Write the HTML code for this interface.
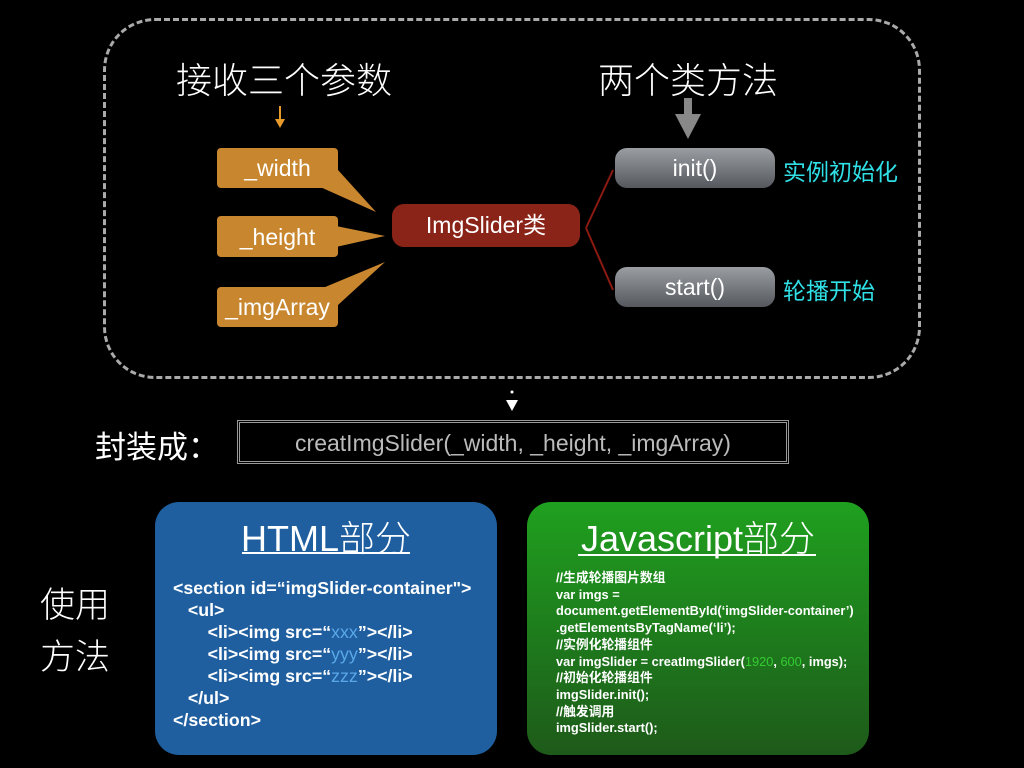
<!DOCTYPE html>
<html><head><meta charset="utf-8"><style>
body{margin:0;width:1024px;height:768px;background:#000;position:relative;overflow:hidden;font-family:"Liberation Sans","Noto Sans CJK SC",sans-serif;color:#fff}
.a{position:absolute;white-space:nowrap}
.t{font-size:35px;font-weight:300}
.g{background:linear-gradient(#9a9ea3,#55595e);border-radius:12px;text-align:center;font-size:23px;line-height:40px;width:160px;height:40px}
.c{color:#2fe0e6;font-size:23px}
.code{font-weight:bold;font-size:17.8px;line-height:22px}
.js{font-weight:bold;font-size:12.8px;line-height:16.7px}
</style></head><body>
<div class="a" style="left:103px;top:18px;width:812px;height:355px;border:3px dashed #aaa;border-radius:52px"></div>
<div class="a t" style="left:176px;top:52px;font-size:36px">接收三个参数</div>
<div class="a t" style="left:598px;top:52px;font-size:36px">两个类方法</div>
<svg class="a" style="left:0;top:0" width="1024" height="768">
<line x1="280" y1="106" x2="280" y2="122" stroke="#e59a2a" stroke-width="2"/>
<polygon points="275,119 285,119 280,128" fill="#e59a2a"/>
<rect x="684" y="98" width="8" height="20" fill="#888"/>
<polygon points="675,114 701,114 688,139" fill="#888"/>
<g fill="#c8862e">
<rect x="217" y="148" width="121" height="40" rx="4"/>
<polygon points="318,186 338,170 376,212"/>
<rect x="217" y="216" width="121" height="41" rx="4"/>
<polygon points="336,226 336,247 385,236"/>
<rect x="217" y="287" width="121" height="40" rx="4"/>
<polygon points="318,290 338,305 385,262"/>
</g>
<line x1="586" y1="228" x2="613" y2="170" stroke="#8b1a12" stroke-width="2"/>
<line x1="586" y1="228" x2="613" y2="290" stroke="#8b1a12" stroke-width="2"/>
<circle cx="512" cy="392" r="1.5" fill="#fff"/>
<polygon points="506,400 518,400 512,411" fill="#fff"/>
</svg>
<div class="a" style="left:217px;top:148px;width:121px;text-align:center;font-size:23px;line-height:40px">_width</div>
<div class="a" style="left:217px;top:217px;width:121px;text-align:center;font-size:23px;line-height:40px">_height</div>
<div class="a" style="left:217px;top:287px;width:121px;text-align:center;font-size:23px;line-height:40px">_imgArray</div>
<div class="a" style="left:392px;top:204px;width:188px;height:43px;background:#8b2418;border-radius:12px;text-align:center;font-size:23px;line-height:43px">ImgSlider类</div>
<div class="a g" style="left:615px;top:148px">init()</div>
<div class="a g" style="left:615px;top:267px">start()</div>
<div class="a c" style="left:783px;top:153px">实例初始化</div>
<div class="a c" style="left:783px;top:272px">轮播开始</div>
<div class="a" style="left:95px;top:422px;font-size:31px">封装成：</div>
<div class="a" style="left:237px;top:420px;width:546px;height:38px;border:3px solid #999;border-style:double;color:#bbb;font-size:23px;line-height:40px;text-align:center">creatImgSlider(_width, _height, _imgArray)</div>
<div class="a t" style="left:40px;top:580px;line-height:52px">使用<br>方法</div>
<div class="a" style="left:155px;top:502px;width:342px;height:253px;background:#1f5f9f;border-radius:24px"></div>
<div class="a t" style="left:155px;top:510px;width:342px;text-align:center;font-size:36px">HTML部分</div>
<div class="a" style="left:242px;top:552px;width:168px;height:2px;background:#fff"></div>
<div class="a code" style="left:173px;top:577px">&lt;section id=“imgSlider-container"&gt;<br>&nbsp;&nbsp;&nbsp;&lt;ul&gt;<br>&nbsp;&nbsp;&nbsp;&nbsp;&nbsp;&nbsp;&nbsp;&lt;li&gt;&lt;img src=“<span style="color:#5aa8e8;font-weight:normal">xxx</span>”&gt;&lt;/li&gt;<br>&nbsp;&nbsp;&nbsp;&nbsp;&nbsp;&nbsp;&nbsp;&lt;li&gt;&lt;img src=“<span style="color:#5aa8e8;font-weight:normal">yyy</span>”&gt;&lt;/li&gt;<br>&nbsp;&nbsp;&nbsp;&nbsp;&nbsp;&nbsp;&nbsp;&lt;li&gt;&lt;img src=“<span style="color:#5aa8e8;font-weight:normal">zzz</span>”&gt;&lt;/li&gt;<br>&nbsp;&nbsp;&nbsp;&lt;/ul&gt;<br>&lt;/section&gt;</div>
<div class="a" style="left:527px;top:502px;width:342px;height:253px;background:linear-gradient(#1fa01f,#1e5a1a);border-radius:24px"></div>
<div class="a t" style="left:527px;top:510px;width:342px;text-align:center;font-size:36px">Javascript部分</div>
<div class="a" style="left:578px;top:554px;width:238px;height:2px;background:#fff"></div>
<div class="a js" style="left:556px;top:570px">//生成轮播图片数组<br>var imgs =<br>document.getElementById(‘imgSlider-container’)<br>.getElementsByTagName(‘li’);<br>//实例化轮播组件<br>var imgSlider = creatImgSlider(<span style="color:#3c3;font-weight:normal">1920</span>, <span style="color:#3c3;font-weight:normal">600</span>, imgs);<br>//初始化轮播组件<br>imgSlider.init();<br>//触发调用<br>imgSlider.start();</div>
</body></html>
